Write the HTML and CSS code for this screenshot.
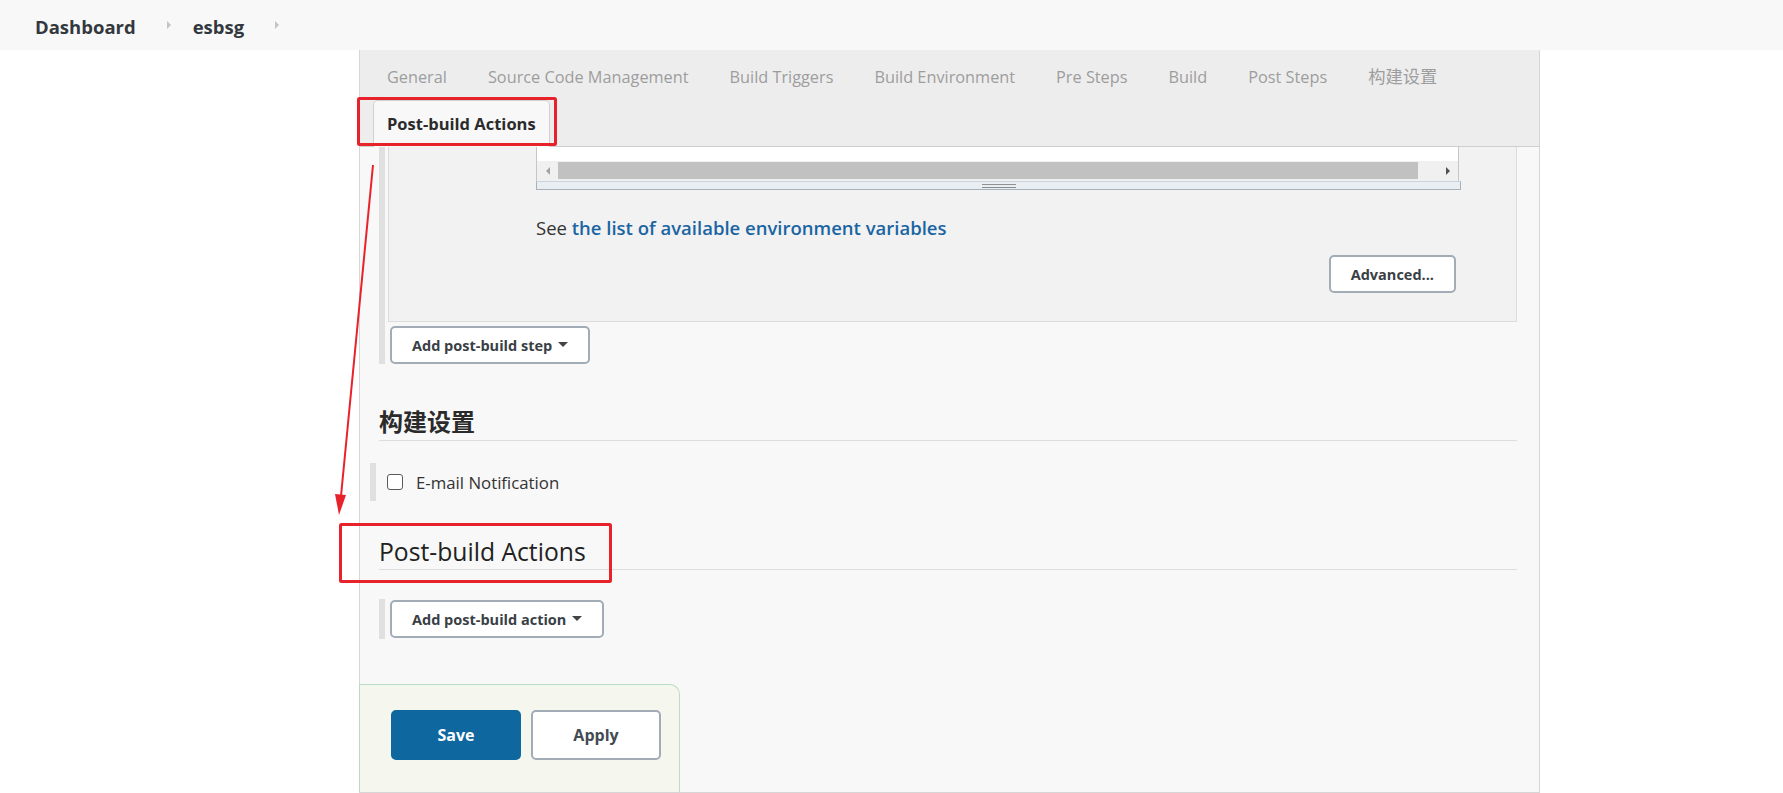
FILE: index.html
```html
<!DOCTYPE html>
<html lang="en">
<head>
<meta charset="utf-8">
<title>esbsg Config [Jenkins]</title>
<link rel="stylesheet" href="styles.css">
</head>
<body>
<header class="breadcrumbs">
  <a class="crumb">Dashboard</a>
  <span class="sep"></span>
  <a class="crumb">esbsg</a>
  <span class="sep"></span>
</header>

<main class="config">
  <nav class="tabbar">
    <span class="tab">General</span>
    <span class="tab">Source Code Management</span>
    <span class="tab">Build Triggers</span>
    <span class="tab">Build Environment</span>
    <span class="tab">Pre Steps</span>
    <span class="tab">Build</span>
    <span class="tab">Post Steps</span>
    <span class="tab zh">构建设置</span>
    <span class="tab active">Post-build Actions</span>
  </nav>

  <div class="content">
    <div class="chunk-list">
      <div class="chunk">
        <div class="editor">
          <div class="editor-text"></div>
          <div class="hscroll">
            <span class="arrow-cell"><span class="arr arr-left"></span></span>
            <span class="thumb"></span>
            <span class="spacer"></span>
            <span class="arrow-cell"><span class="arr arr-right"></span></span>
          </div>
          <div class="resize"><span class="grip"></span></div>
        </div>
        <p class="help">See <a class="link">the list of available environment variables</a></p>
        <div class="adv-row"><button class="btn adv">Advanced...</button></div>
      </div>
      <button class="btn dd">Add post-build step<span class="caret"></span></button>
    </div>

    <h2 class="section-title zh-title">构建设置</h2>

    <div class="optional">
      <input type="checkbox" class="check">
      <label class="opt-label">E-mail Notification</label>
    </div>

    <h2 class="section-title">Post-build Actions</h2>

    <div class="chunk-list short">
      <button class="btn dd">Add post-build action<span class="caret"></span></button>
    </div>
  </div>

  <div class="bottom-bar">
    <button class="btn primary">Save</button>
    <button class="btn secondary">Apply</button>
  </div>
</main>

<svg class="annotations" width="1783" height="793" viewBox="0 0 1783 793">
  <rect x="358.5" y="98.5" width="197" height="46" fill="none" stroke="#e8222b" stroke-width="3" rx="1"/>
  <rect x="340.5" y="524.5" width="270" height="57" fill="none" stroke="#e8222b" stroke-width="3" rx="1"/>
  <line x1="373" y1="165" x2="341" y2="496" stroke="#e8222b" stroke-width="2"/>
  <polygon points="339,515 346,495 335,494" fill="#e8222b"/>
</svg>
</body>
</html>
```

FILE: styles.css
```css
html, body {
  margin: 0;
  padding: 0;
  background: #ffffff;
  overflow: hidden;
}

body {
  font-family: "Open Sans", "Noto Sans CJK SC", sans-serif;
  color: #333;
  font-size: 16px;
  position: relative;
}

/* breadcrumbs */
.breadcrumbs {
  height: 50px;
  box-sizing: border-box;
  background: #f8f8f8;
  display: flex;
  align-items: center;
  padding: 3px 0 0 35px;
}

.crumb {
  font-weight: 700;
  font-size: 18.5px;
  color: #33383e;
}

.sep {
  width: 0;
  height: 0;
  border-left: 4px solid #c4c4c4;
  border-top: 4px solid transparent;
  border-bottom: 4px solid transparent;
  margin: -3px 22px 0 31px;
}

/* main config panel */
.config {
  margin-left: 359px;
  width: 1181px;
  height: 743px;
  box-sizing: border-box;
  background: #f8f8f8;
  border: 1px solid #d6d6d6;
  border-top: none;
  display: flex;
  flex-direction: column;
}

.tabbar {
  background: #ededed;
  border-bottom: 1px solid #cfcfcf;
  display: flex;
  flex-wrap: wrap;
  padding: 4px 0 0 13px;
}

.tab {
  height: 46px;
  box-sizing: border-box;
  line-height: 44px;
  padding: 0 13px;
  border: 1px solid transparent;
  border-bottom: none;
  margin-right: 13px;
  color: #9d9d9d;
  font-size: 16.3px;
  white-space: nowrap;
}

.tab.zh {
  font-size: 17.3px;
}

.tab.active {
  background: #f8f8f8;
  border-color: #d0d0d0;
  border-radius: 5px 5px 0 0;
  color: #2b2b2b;
  font-weight: 700;
  font-size: 16.5px;
  margin-bottom: -1px;
  height: 47px;
  line-height: 46px;
}

/* content */
.content {
  padding: 0 22px 0 19px;
}

.chunk-list {
  border-left: 6px solid #e0e0e0;
  padding-left: 3px;
}

.chunk {
  background: #f2f2f2;
  border: 1px solid #dcdcdc;
  border-top: none;
  padding-bottom: 28px;
}

.editor {
  margin-left: 147px;
  width: 925px;
}

.editor-text {
  height: 14px;
  background: #ffffff;
  border-left: 1px solid #c6c6c6;
  border-right: 1px solid #c6c6c6;
  margin-right: 2px;
}

.hscroll {
  height: 20px;
  background: #f0f0f0;
  display: flex;
  align-items: center;
  border-left: 1px solid #c6c6c6;
  border-right: 1px solid #c6c6c6;
  margin-right: 2px;
}

.arrow-cell {
  width: 21px;
  height: 20px;
  display: flex;
  align-items: center;
  justify-content: center;
}

.arr {
  width: 0;
  height: 0;
  border-top: 4px solid transparent;
  border-bottom: 4px solid transparent;
}

.arr-left {
  border-right: 4px solid #a3a3a3;
}

.arr-right {
  border-left: 4px solid #505050;
}

.thumb {
  width: 860px;
  height: 17px;
  background: #c1c1c1;
  margin-bottom: 1px;
}

.spacer {
  flex: 1;
}

.resize {
  height: 9px;
  box-sizing: border-box;
  background: #e9eef2;
  border: 1px solid #a7b1bb;
  border-top-color: #cdd3d8;
  display: flex;
  justify-content: center;
  align-items: center;
}

.grip {
  width: 34px;
  height: 4px;
  box-sizing: border-box;
  border-top: 1px solid #8f8f8f;
  border-bottom: 1px solid #8f8f8f;
}

.help {
  margin: 27px 0 0 147px;
  line-height: 22px;
  font-size: 18.5px;
  color: #333;
}

.link {
  color: #1a65a2;
  font-weight: 600;
}

.adv-row {
  display: flex;
  justify-content: flex-end;
  padding-right: 60px;
  margin-top: 16px;
}

/* buttons */
.btn {
  font-family: "Open Sans", "Noto Sans CJK SC", sans-serif;
  font-weight: 700;
  font-size: 14.5px;
  color: #3a3f46;
  background: #ffffff;
  border: 2px solid #a2acb6;
  border-radius: 5px;
  height: 38px;
  box-sizing: border-box;
  padding: 0 20px;
  display: inline-flex;
  align-items: center;
  justify-content: center;
}

.btn.dd {
  padding: 0 20px;
  margin: 4px 0 0 2px;
}

.chunk-list.short .btn.dd {
  margin-top: 0;
}

.caret {
  width: 0;
  height: 0;
  border-top: 5px solid #444;
  border-left: 5px solid transparent;
  border-right: 5px solid transparent;
  margin: -2px 0 0 6px;
}

/* section headings */
.section-title {
  margin: 43px 0 0 0;
  font-size: 24px;
  line-height: 30px;
  font-weight: 400;
  color: #222;
  padding-bottom: 2px;
  border-bottom: 1px solid #dddddd;
}

.section-title.zh-title {
  font-weight: 700;
  padding-bottom: 3px;
  color: #2b2b2b;
}

.section-title:not(.zh-title) {
  margin-top: 36px;
  font-size: 24.7px;
}

.optional {
  margin: 22px 0 0 -9px;
  height: 38px;
  border-left: 6px solid #e0e0e0;
  display: flex;
  align-items: center;
}

.check {
  appearance: none;
  -webkit-appearance: none;
  width: 16px;
  height: 16px;
  box-sizing: border-box;
  border: 1px solid #5a5a5a;
  border-radius: 3px;
  background: #fff;
  margin: 0 13px 0 11px;
}

.opt-label {
  font-size: 16.8px;
  color: #333;
}

.chunk-list.short {
  margin-top: 29px;
  height: 40px;
  display: flex;
  align-items: center;
  padding-left: 3px;
}

/* bottom bar */
.bottom-bar {
  margin-top: auto;
  margin-left: -1px;
  width: 321px;
  height: 108px;
  box-sizing: border-box;
  background: #f5f7ef;
  border: 1px solid #b9dcc5;
  border-bottom: none;
  border-radius: 0 10px 0 0;
  padding: 25px 0 0 31px;
  display: flex;
  align-items: flex-start;
  gap: 10px;
}

.btn.primary {
  width: 130px;
  height: 50px;
  background: #0e679f;
  border-color: #0e679f;
  color: #ffffff;
  font-size: 16px;
}

.btn.secondary {
  width: 130px;
  height: 50px;
  color: #444a52;
  font-size: 16px;
}

/* annotations overlay */
.annotations {
  position: absolute;
  top: 0;
  left: 0;
  pointer-events: none;
}
```
